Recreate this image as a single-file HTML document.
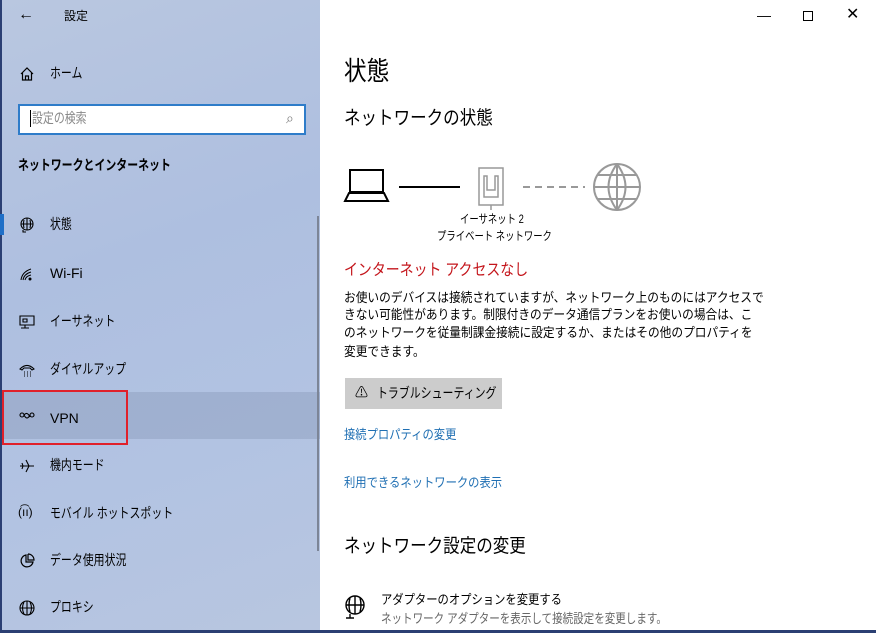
<!DOCTYPE html>
<html><head><meta charset="utf-8"><style>
*{margin:0;padding:0;box-sizing:border-box}
body{width:876px;height:633px;overflow:hidden;position:relative;background:#fff;font-family:"Liberation Sans","Noto Sans CJK JP",sans-serif;color:#000}
.side{position:absolute;left:0;top:0;width:320px;height:633px;background:linear-gradient(160deg,#b9c7e0 0%,#aebfe0 40%,#b2c3e2 70%,#b8c6e0 100%);border-left:2px solid #2b3f73}
.t{position:absolute;white-space:nowrap;line-height:1;transform-origin:left top}
.it{font-size:14px;left:48px}
.k{transform:scaleX(.78)}
.s{transform:scaleX(.87)}
.b{transform:scaleX(.9)}
.ic{position:absolute;left:17px}
.main .t{font-size:13px}
a{color:#1f6fb3;text-decoration:none}
</style></head><body>
<div class="side">
<div class="t" style="left:16px;top:7px;font-size:16px">←</div>
<div class="t" style="left:62px;top:10px;font-size:12px">設定</div>
<svg class="ic" style="top:66px" width="16" height="16" viewBox="0 0 16 16" fill="none" stroke="#000" stroke-width="1.2"><path d="M2 8 L8 2 L14 8 M3.5 6.5 V14 H12.5 V6.5 M6.5 14 V10 H9.5 V14"/></svg>
<div class="t it k" style="top:66px">ホーム</div>
<div style="position:absolute;left:16px;top:104px;width:288px;height:31px;background:#fff;border:2px solid #2e7cc9"></div>
<div style="position:absolute;left:28px;top:110px;width:1px;height:17px;background:#000"></div>
<div class="t k" style="left:30px;top:111px;font-size:14px;color:#888">設定の検索</div>
<div class="t" style="left:284px;top:111px;font-size:14px;color:#777">⌕</div>
<div class="t k" style="left:16px;top:158px;font-size:14px;font-weight:bold">ネットワークとインターネット</div>
<div style="position:absolute;left:-2px;top:214px;width:4px;height:21px;background:#1f6fc7"></div>
<svg class="ic" style="top:217px" width="16" height="16" viewBox="0 0 16 16" fill="none" stroke="#000" stroke-width="1.1"><circle cx="8" cy="7" r="6"/><path d="M2 7 H14 M8 1 V13 M5 3 Q4 7 5 11 M11 3 Q12 7 11 11 M4 13 V15 H7"/></svg>
<div class="t it k" style="top:217px">状態</div>
<svg class="ic" style="top:266px" width="16" height="16" viewBox="0 0 16 16" fill="none" stroke="#000" stroke-width="1"><path d="M2 14 Q3 6 12 3 M4 14 Q5 8 12 6 M6 14 Q7 10 12 9"/><circle cx="11" cy="13" r="1" fill="#000"/></svg>
<div class="t it" style="top:266px">Wi-Fi</div>
<svg class="ic" style="top:314px" width="16" height="16" viewBox="0 0 16 16" fill="none" stroke="#000" stroke-width="1.1"><path d="M1 2 H15 V11 H1 Z M4 5 H8 V8 H4 Z M6 11 V14 M2 14 H10"/></svg>
<div class="t it k" style="top:314px">イーサネット</div>
<svg class="ic" style="top:362px" width="16" height="16" viewBox="0 0 16 16" fill="none" stroke="#000" stroke-width="1.1"><path d="M1 7 Q8 0 15 7 L13 8 L11 6 H5 L3 8 Z"/><path d="M5 10h1M8 10h1M11 10h1M5 12h1M8 12h1M11 12h1M5 14h1M8 14h1M11 14h1" stroke-width="1"/></svg>
<div class="t it k" style="top:362px">ダイヤルアップ</div>
<div style="position:absolute;left:0;top:392px;width:318px;height:47px;background:rgba(120,135,165,0.3)"></div>
<div style="position:absolute;left:0;top:390px;width:126px;height:55px;border:2px solid #e0202a"></div>
<svg class="ic" style="top:412px" width="16" height="10" viewBox="0 0 16 10" fill="none" stroke="#000" stroke-width="1.1"><circle cx="3" cy="3" r="2"/><circle cx="13" cy="3" r="2"/><path d="M5 3 Q8 9 11 3 M5 3 Q8 -1 11 5"/></svg>
<div class="t it" style="top:411px">VPN</div>
<svg class="ic" style="top:458px" width="16" height="16" viewBox="0 0 16 16" fill="none" stroke="#000" stroke-width="1.1"><path d="M1 8 H15 M7 2 L10 8 L7 14 M3 5 L4 8 L3 11"/></svg>
<div class="t it k" style="top:458px">機内モード</div>
<div class="t" style="left:16px;top:506px;font-size:12px">(ı͡ı)</div>
<div class="t it k" style="top:506px">モバイル ホットスポット</div>
<svg class="ic" style="top:553px" width="16" height="16" viewBox="0 0 16 16" fill="none" stroke="#000" stroke-width="1.2"><path d="M7 2 A6 6 0 1 0 14 9 H7 Z M9 1 V7 H15 A6 6 0 0 0 9 1"/></svg>
<div class="t it k" style="top:553px">データ使用状況</div>
<svg class="ic" style="top:600px" width="16" height="16" viewBox="0 0 16 16" fill="none" stroke="#000" stroke-width="1.1"><circle cx="8" cy="8" r="7"/><path d="M1 8 H15 M8 1 V15 M5 2 Q2 8 5 14 M11 2 Q14 8 11 14"/></svg>
<div class="t it k" style="top:600px">プロキシ</div>
<div style="position:absolute;left:315px;top:216px;width:2px;height:335px;background:#7c8597"></div>
</div>
<div style="position:absolute;left:0;top:630px;width:876px;height:3px;background:#2b3f73"></div>
<div class="main">
<div class="t" style="left:757px;top:8px;font-size:14px">—</div>
<div style="position:absolute;left:803px;top:11px;width:10px;height:10px;border:1px solid #000"></div>
<div class="t" style="left:846px;top:7px;font-size:16px;font-weight:300">✕</div>
<div class="t s" style="left:344px;top:58px;font-size:26px!important">状態</div>
<div class="t s" style="left:344px;top:109px;font-size:19px!important">ネットワークの状態</div>
<svg style="position:absolute;left:340px;top:160px" width="310" height="55" viewBox="0 0 310 55" fill="none">
<path d="M10 10 H43 V32 H10 Z M5 41 H48 L44 33 H9 Z" stroke="#000" stroke-width="2"/>
<path d="M59 27 H120" stroke="#000" stroke-width="2"/>
<path d="M139 8 H163 V45 H139 Z" stroke="#999" stroke-width="1.5"/>
<path d="M144 16 V37 H158 V16 H155 V30 H147 V16 Z" stroke="#999" stroke-width="1.5"/><path d="M151 45 V50" stroke="#999" stroke-width="1.5"/>
<path d="M183 27 H245" stroke="#999" stroke-width="2" stroke-dasharray="7 5"/>
<circle cx="277" cy="27" r="23" stroke="#999" stroke-width="2"/>
<path d="M254 27 H300 M277 4 V50 M258 15 H296 M258 39 H296 M277 4 Q260 27 277 50 M277 4 Q294 27 277 50" stroke="#999" stroke-width="2"/>
</svg>
<div class="t k" style="left:460px;top:213px;font-size:12px!important">イーサネット 2</div>
<div class="t k" style="left:437px;top:230px;font-size:12px!important">プライベート ネットワーク</div>
<div class="t s" style="left:344px;top:263px;font-size:16px!important;color:#c4161c">インターネット アクセスなし</div>
<div class="t b" style="left:344px;top:291px">お使いのデバイスは接続されていますが、ネットワーク上のものにはアクセスで</div>
<div class="t b" style="left:344px;top:308px">きない可能性があります。制限付きのデータ通信プランをお使いの場合は、こ</div>
<div class="t b" style="left:344px;top:326px">のネットワークを従量制課金接続に設定するか、またはその他のプロパティを</div>
<div class="t b" style="left:344px;top:345px">変更できます。</div>
<div style="position:absolute;left:345px;top:378px;width:157px;height:31px;background:#cccccc"></div>
<div class="t" style="left:355px;top:386px">⚠</div>
<div class="t k" style="left:377px;top:386px;font-size:14px!important">トラブルシューティング</div>
<div class="t s" style="left:344px;top:428px"><a>接続プロパティの変更</a></div>
<div class="t s" style="left:344px;top:476px"><a>利用できるネットワークの表示</a></div>
<div class="t s" style="left:344px;top:537px;font-size:19px!important">ネットワーク設定の変更</div>
<svg style="position:absolute;left:344px;top:594px" width="22" height="26" viewBox="0 0 22 26" fill="none" stroke="#000" stroke-width="1.4"><circle cx="11" cy="11" r="9"/><path d="M2 11 H20 M11 2 V20 M6 4 Q4 11 6 18 M16 4 Q18 11 16 18 M6 20 V24 M2 24 H10"/></svg>
<div class="t s" style="left:381px;top:593px">アダプターのオプションを変更する</div>
<div class="t" style="left:381px;top:612px;color:#666;transform:scaleX(.81)">ネットワーク アダプターを表示して接続設定を変更します。</div>
</div>
</body></html>
